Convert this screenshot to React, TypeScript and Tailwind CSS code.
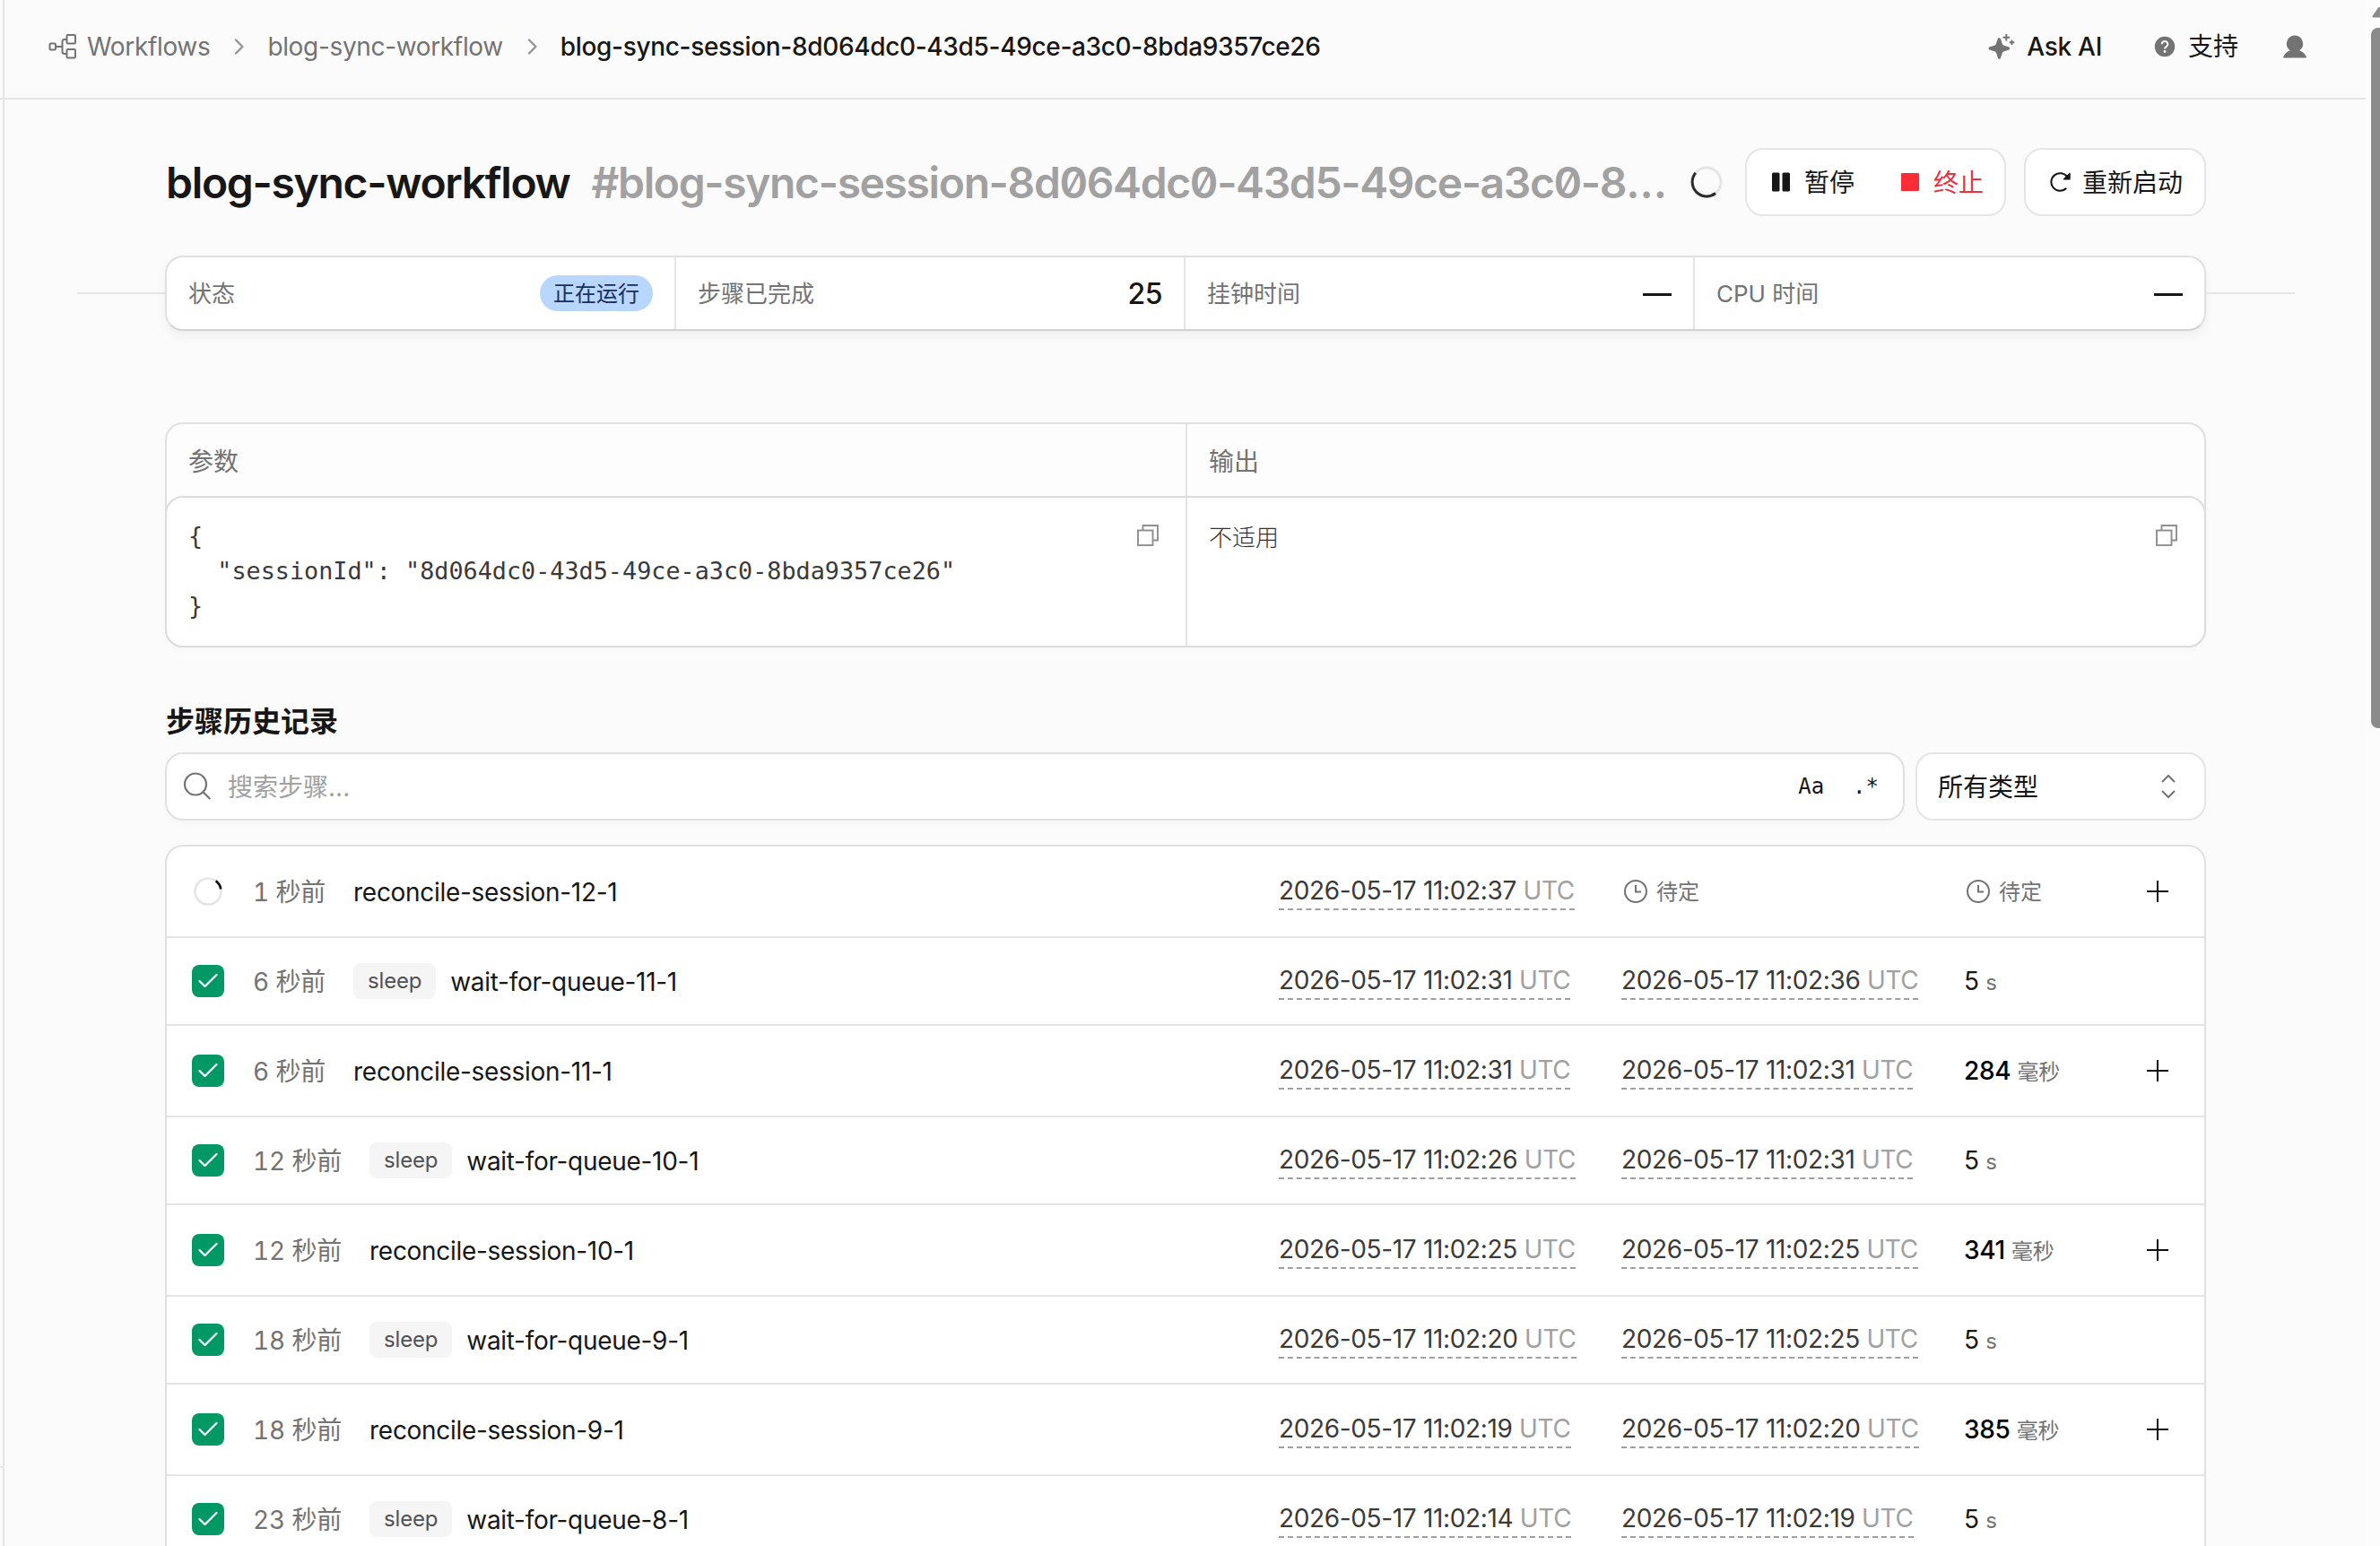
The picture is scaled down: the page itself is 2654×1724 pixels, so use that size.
import type { ReactNode } from "react";

type Step = {
  ago: string;
  name: string;
  sleep?: boolean;
  start: string;
  end?: string;
  value?: string;
  unit?: string;
};

const steps: Step[] = [
  { ago: "1 秒前", name: "reconcile-session-12-1", start: "11:02:37" },
  { ago: "6 秒前", name: "wait-for-queue-11-1", sleep: true, start: "11:02:31", end: "11:02:36", value: "5", unit: "s" },
  { ago: "6 秒前", name: "reconcile-session-11-1", start: "11:02:31", end: "11:02:31", value: "284", unit: "毫秒" },
  { ago: "12 秒前", name: "wait-for-queue-10-1", sleep: true, start: "11:02:26", end: "11:02:31", value: "5", unit: "s" },
  { ago: "12 秒前", name: "reconcile-session-10-1", start: "11:02:25", end: "11:02:25", value: "341", unit: "毫秒" },
  { ago: "18 秒前", name: "wait-for-queue-9-1", sleep: true, start: "11:02:20", end: "11:02:25", value: "5", unit: "s" },
  { ago: "18 秒前", name: "reconcile-session-9-1", start: "11:02:19", end: "11:02:20", value: "385", unit: "毫秒" },
  { ago: "23 秒前", name: "wait-for-queue-8-1", sleep: true, start: "11:02:14", end: "11:02:19", value: "5", unit: "s" },
];

const SESSION = "8d064dc0-43d5-49ce-a3c0-8bda9357ce26";

function WorkflowIcon() {
  return (
    <svg width="32" height="30" viewBox="0 0 32 30" fill="none" stroke="#737373" strokeWidth="2" className="shrink-0">
      <rect x="1.5" y="11.5" width="6.5" height="7" rx="1.2" />
      <rect x="20.5" y="2" width="9.5" height="9.5" rx="1.2" />
      <rect x="20.5" y="18" width="9.5" height="9.5" rx="1.2" />
      <path d="M8 15h7.5M20.5 7h-2.6a2.4 2.4 0 0 0-2.4 2.4v11.2a2.4 2.4 0 0 0 2.4 2.4h2.6" />
    </svg>
  );
}

function ChevronIcon() {
  return (
    <svg width="12" height="18" viewBox="0 0 12 18" fill="none" stroke="#959595" strokeWidth="2.4" className="shrink-0">
      <path d="M2 1.5 9.4 9 2 16.5" strokeLinecap="round" strokeLinejoin="round" />
    </svg>
  );
}

function SparkleIcon() {
  return (
    <svg width="30" height="30" viewBox="0 0 30 30" fill="#737373" className="shrink-0">
      <path d="M12.4 5.2c.9 0 1.5.6 1.8 1.5l1.5 5a3 3 0 0 0 2 2l5 1.6c1 .3 1.5.9 1.5 1.7s-.6 1.4-1.5 1.7l-5 1.6a3 3 0 0 0-2 2l-1.6 5c-.3 1-.9 1.5-1.7 1.5s-1.4-.6-1.7-1.5l-1.5-5a3 3 0 0 0-2-2l-5-1.6C1 18.4.5 17.8.5 17s.6-1.4 1.5-1.7l5-1.6a3 3 0 0 0 2-2l1.6-5c.3-1 .9-1.5 1.8-1.5Z" />
      <path d="M20.3 1v7.4M16.6 4.7H24M26.5 7.5v5.6M23.7 10.3h5.6" fill="none" stroke="#737373" strokeWidth="1.9" />
    </svg>
  );
}

function HelpIcon() {
  return (
    <svg width="24" height="24" viewBox="0 0 24 24" fill="none" className="shrink-0">
      <circle cx="12" cy="12" r="11.2" fill="#737373" />
      <path d="M8.7 9.3a3.3 3.3 0 1 1 5 2.8c-1.1.6-1.7 1.2-1.7 2.4" stroke="#fbfbfb" strokeWidth="2.1" />
      <circle cx="12" cy="17.5" r="1.4" fill="#fbfbfb" />
    </svg>
  );
}

function UserIcon() {
  return (
    <svg width="26" height="26" viewBox="0 0 26 26" fill="#737373" className="shrink-0">
      <path d="M13 .5a9.2 9.2 0 0 1 5.2 16.7c3.6 1.2 6.3 3.7 7.6 7.2.2.7-.1 1.1-.8 1.1H1c-.7 0-1-.4-.8-1.1 1.3-3.5 4-6 7.6-7.2A9.2 9.2 0 0 1 13 .5Z" />
    </svg>
  );
}

function RestartIcon() {
  return (
    <svg width="26" height="24" viewBox="0 0 26 24" fill="none" className="shrink-0">
      <path d="M19.2 18.8A9.8 9.8 0 1 1 20.5 6.8" stroke="#161616" strokeWidth="2" />
      <path d="M23 2.5v6.3h-6.5Z" fill="#161616" stroke="#161616" strokeWidth="1.4" strokeLinejoin="round" />
    </svg>
  );
}

function CopyIcon() {
  return (
    <svg width="26" height="26" viewBox="0 0 26 26" fill="none" stroke="#8f8f8f" strokeWidth="1.9" className="shrink-0">
      <path d="M7.5 7V2H24v16.5h-5" />
      <rect x="2" y="7.5" width="16.5" height="16.5" />
    </svg>
  );
}

function ClockIcon() {
  return (
    <svg width="28" height="28" viewBox="0 0 28 28" fill="none" stroke="#737373" strokeWidth="2" className="shrink-0">
      <circle cx="14" cy="14" r="12" />
      <path d="M14 7v7.5h6" />
    </svg>
  );
}

function PlusIcon() {
  return (
    <svg width="24" height="24" viewBox="0 0 24 24" stroke="#111" strokeWidth="2">
      <path d="M12 0v24M0 12h24" />
    </svg>
  );
}

function Stat({ label, children }: { label: string; children: ReactNode }) {
  return (
    <div className="flex items-center justify-between border-r-2 border-[#e5e5e5] pr-6 pl-6 text-[26px] text-[#737373] last:border-r-0">
      <span className="pt-[2px]">{label}</span>
      {children}
    </div>
  );
}

function Timestamp({ time }: { time: string }) {
  return (
    <span className="mt-[-1px] h-[42px] border-b-2 border-dashed border-[#a0a0a0] leading-[41px] tracking-[-0.35px] whitespace-nowrap text-[#3a3a3a]">
      2026-05-17 {time} <span className="text-[#a1a1a1]">UTC</span>
    </span>
  );
}

function Pending() {
  return (
    <span className="ml-[2px] flex items-center gap-[9px] text-2xl leading-10 text-[#737373]">
      <ClockIcon />
      <span className="pt-px">待定</span>
    </span>
  );
}

function StepRow({ step }: { step: Step }) {
  const done = Boolean(step.end);
  return (
    <div
      className={`grid grid-cols-[1212px_382px_382px_auto] items-center border-b-2 border-[#e5e5e5] pl-[28px] ${
        step.sleep ? "h-[98px]" : "h-[102px]"
      }`}
    >
      <div className="flex items-center">
        {done ? (
          <span className="flex size-9 items-center justify-center rounded-lg bg-[#009966]">
            <svg width="22" height="18" viewBox="0 0 22 18" fill="none" stroke="#fff" strokeWidth="2.2">
              <path d="m1.5 9 6 6L20.5 2" strokeLinecap="round" strokeLinejoin="round" />
            </svg>
          </span>
        ) : (
          <svg width="36" height="36" viewBox="0 0 36 36" fill="none" strokeWidth="2.6">
            <circle cx="18" cy="18" r="14.5" stroke="#e5e5e5" />
            <path d="M26.7 6.4A14.5 14.5 0 0 1 32.3 15.4" stroke="#111" />
          </svg>
        )}
        <span className="ml-8 pt-[2px] tracking-[-0.15px] text-[#737373] tabular-nums">{step.ago}</span>
        {step.sleep && (
          <span className="ml-[31px] -mr-4 flex h-10 items-center rounded-lg bg-[#f5f5f5] px-4 text-2xl tracking-[-0.2px] text-[#525252]">
            sleep
          </span>
        )}
        <span className={`pt-[2px] tracking-[-0.3px] text-[#171717] ${step.sleep ? "ml-8" : "ml-[31px]"}`}>{step.name}</span>
      </div>
      <div className="flex">
        <Timestamp time={step.start} />
      </div>
      <div className="flex">{step.end ? <Timestamp time={step.end} /> : <Pending />}</div>
      <div className="flex items-center justify-between pr-[40px]">
        {done ? (
          <span className={`pt-[2px] tracking-[-0.3px] ${step.sleep ? "text-[#171717]" : "font-medium text-black"}`}>
            {step.value} <span className="text-2xl leading-10 font-normal text-[#737373]">{step.unit}</span>
          </span>
        ) : (
          <Pending />
        )}
        {!step.sleep && <PlusIcon />}
      </div>
    </div>
  );
}

export default function App() {
  return (
    <div className="flex h-[1724px] w-[2654px] overflow-hidden bg-[#fbfbfb] font-['Inter','Noto_Sans_CJK_SC',sans-serif] text-[28px] leading-10 text-[#171717]">
      {/* Edge of the collapsed sidebar */}
      <div className="flex w-[5px] shrink-0 flex-col justify-between border-r-2 border-[#e5e5e5]">
        <div className="h-[111px] border-b-2 border-[#e5e5e5]" />
        <div className="h-[89px] border-t-2 border-[#e5e5e5]" />
      </div>

      <div className="w-[2633px] shrink-0">
        <header className="flex h-[111px] items-center justify-between border-b-2 border-[#e5e5e5] pr-[66px] pb-[5px] pl-[49px]">
          <nav className="flex items-center tracking-[-0.34px] text-[#737373]">
            <WorkflowIcon />
            <span className="ml-[11px]">Workflows</span>
            <span className="mr-[25px] ml-[27px]"><ChevronIcon /></span>
            <span>blog-sync-workflow</span>
            <span className="mr-[25px] ml-[27px]"><ChevronIcon /></span>
            <span className="font-medium text-[#171717]">blog-sync-session-{SESSION}</span>
          </nav>
          <div className="flex items-center font-medium">
            <SparkleIcon />
            <span className="ml-[13px] tracking-[-0.3px]">Ask AI</span>
            <span className="ml-[58px]"><HelpIcon /></span>
            <span className="ml-[14px] font-normal">支持</span>
            <span className="ml-[50px]"><UserIcon /></span>
          </div>
        </header>

        <main className="px-[79px]">
          <div className="mt-[54px] flex h-[76px] items-center pr-[99px] pl-[101px]">
            <h1 className="shrink-0 pt-px text-5xl font-semibold tracking-[-1.32px]">blog-sync-workflow</h1>
            <div className="ml-6 shrink-0 pt-px text-5xl font-semibold tracking-[-1.38px] whitespace-nowrap text-[#a1a1a1] slashed-zero">
              #blog-sync-session-{SESSION.slice(0, 25)}
              <span className="tracking-[0px]">...</span>
            </div>
            <svg width="36" height="36" viewBox="0 0 36 36" fill="none" strokeWidth="3" className="ml-auto shrink-0">
              <circle cx="18" cy="18" r="16" stroke="#e5e5e5" />
              <path d="M5.8 7.7A16 16 0 0 0 28 30.5" stroke="#2b2b2b" />
            </svg>
            <div className="ml-[25px] flex h-[76px] w-[291px] shrink-0 items-center rounded-[20px] border-2 border-[#e5e5e5] bg-white pl-7">
              <svg width="20" height="22" viewBox="0 0 20 22" fill="#171717">
                <rect y="0.5" width="8.5" height="21" rx="1.5" />
                <rect x="11.5" y="0.5" width="8.5" height="21" rx="1.5" />
              </svg>
              <span className="ml-4 pt-px">暂停</span>
              <span className="ml-[52px] size-5 rounded-[1px] bg-[#fb2c36]" />
              <span className="ml-4 pt-px text-[#e7333c]">终止</span>
            </div>
            <div className="ml-5 flex h-[76px] w-[203px] shrink-0 items-center rounded-[20px] border-2 border-[#e5e5e5] bg-white pl-[26px]">
              <RestartIcon />
              <span className="ml-[11px] pt-px whitespace-nowrap">重新启动</span>
            </div>
          </div>

          {/* Stats strip */}
          <div className="mt-[44px] flex items-center">
            <div className="ml-[2px] h-[2px] w-[98px] bg-[#e5e5e5]" />
            <div className="grid h-[84px] w-[2276px] shrink-0 grid-cols-4 rounded-[20px] border-2 border-[#e0e0e0] border-b-[#d2d2d2] bg-white shadow-[0_6px_12px_rgba(0,0,0,0.05)]">
              <Stat label="状态">
                <span className="flex h-10 items-center rounded-full bg-[#b9d6ff] px-[15px] pt-px text-2xl text-[#152f5e]">正在运行</span>
              </Stat>
              <Stat label="步骤已完成">
                <span className="pt-px text-[32px] font-medium tracking-[-0.5px] text-[#171717]">25</span>
              </Stat>
              <Stat label="挂钟时间">
                <span className="mt-[2px] h-[3px] w-8 bg-[#171717]" />
              </Stat>
              <Stat label="CPU 时间">
                <span className="mt-[2px] h-[3px] w-8 bg-[#171717]" />
              </Stat>
            </div>
            <div className="h-[2px] flex-1 bg-[#e5e5e5]" />
          </div>

          <div className="pl-[100px]">
            {/* Params / output */}
            <section className="mt-[102px] h-[251px] w-[2276px] rounded-[20px] border-2 border-[#e0e0e0] bg-[#fdfdfd] shadow-[0_4px_10px_rgba(0,0,0,0.02)]">
              <div className="grid h-20 grid-cols-[1138px_1fr] text-[#737373]">
                <div className="flex items-center border-r-2 border-[#e5e5e5] pt-[3px] pl-6">参数</div>
                <div className="flex items-center pt-[3px] pl-6">输出</div>
              </div>
              <div className="-mx-[2px] grid h-[169px] grid-cols-[1138px_1fr] rounded-[20px] border-2 border-[#dcdcdc] bg-white">
                <div className="flex justify-between border-r-2 border-[#e5e5e5] pt-[22px] pr-[29px] pl-6">
                  <pre className="pt-px font-['DejaVu_Sans_Mono','Noto_Sans_CJK_SC',monospace] text-[26.8px] leading-[39px] text-[#3a3a3a]">
                    {`{\n  "sessionId": "${SESSION}"\n}`}
                  </pre>
                  <span className="mt-[7px]"><CopyIcon /></span>
                </div>
                <div className="flex justify-between pt-[22px] pr-[29px] pl-6">
                  <span className="pt-px font-['Noto_Sans_CJK_SC',sans-serif] text-[26px] leading-[39px] font-light text-[#333]">不适用</span>
                  <span className="mt-[7px]"><CopyIcon /></span>
                </div>
              </div>
            </section>

            {/* Step history */}
            <h2 className="mt-[63px] pl-px text-[32px] leading-10 font-bold">步骤历史记录</h2>
            <div className="mt-[14px] flex w-[2276px] gap-3">
              <div className="flex h-[76px] flex-1 items-center rounded-[20px] border-2 border-[#e0e0e0] bg-white pl-[18px] shadow-[0_4px_8px_rgba(0,0,0,0.02)]">
                <svg width="32" height="32" viewBox="0 0 32 32" fill="none" stroke="#737373" strokeWidth="2.2">
                  <circle cx="14" cy="13.5" r="12" />
                  <path d="m22.3 22 8 8" />
                </svg>
                <span className="ml-[18px] pt-[2px] text-[#a1a1a1]">搜索步骤...</span>
                <span className="ml-auto font-['DejaVu_Sans_Mono',monospace] text-2xl">Aa</span>
                <span className="mr-[27px] ml-8 font-['DejaVu_Sans_Mono',monospace] text-2xl">.*</span>
              </div>
              <div className="flex h-[76px] w-[324px] items-center justify-between rounded-[20px] border-2 border-[#e5e5e5] bg-white pr-[32px] pl-[23px]">
                <span className="pt-[2px]">所有类型</span>
                <svg width="16" height="28" viewBox="0 0 16 28" fill="none" stroke="#737373" strokeWidth="2">
                  <path d="m1 9 7-7 7 7M1 19l7 7 7-7" />
                </svg>
              </div>
            </div>

            <div className="mt-[27px] w-[2276px] rounded-t-[20px] border-2 border-b-0 border-[#e0e0e0] bg-white">
              {steps.map((step) => (
                <StepRow key={step.name} step={step} />
              ))}
            </div>
          </div>
        </main>
      </div>

      {/* Scrollbar */}
      <div className="flex w-4 shrink-0 flex-col items-end overflow-hidden bg-[#fcfcfc] pt-[8px]">
        <svg width="9" height="12" viewBox="0 0 9 12" fill="#8b8b8b" className="shrink-0">
          <path d="M9 0v11.5H1.5C.3 11.5.2 10.5.8 9.5L7.5 0Z" />
        </svg>
        <div className="mt-[11px] h-[781px] w-[10px] shrink-0 rounded-l-[8px] bg-[#8b8b8b]" />
      </div>
    </div>
  );
}
